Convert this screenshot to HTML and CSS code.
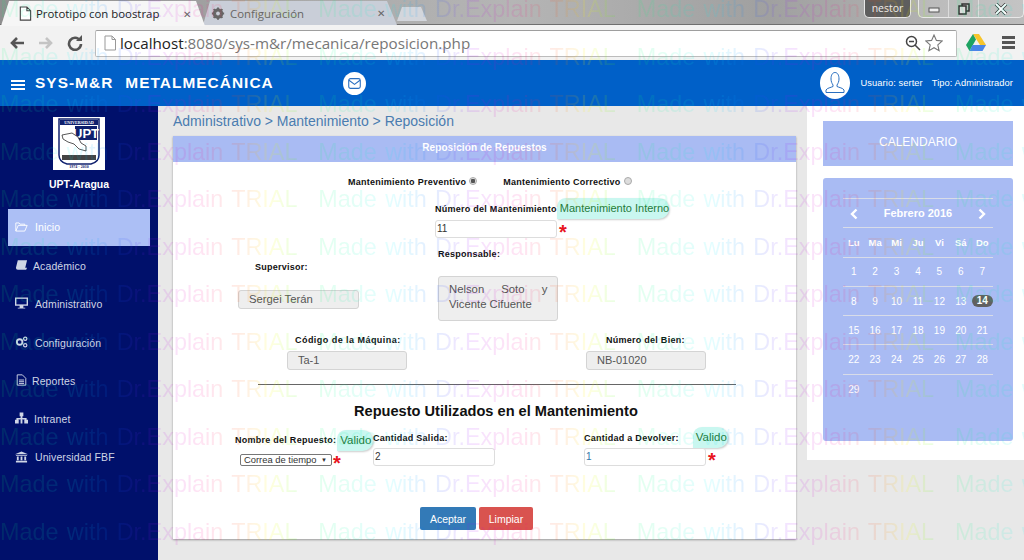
FILE: index.html
```html
<!DOCTYPE html>
<html lang="es">
<head>
<meta charset="utf-8">
<title>Prototipo con boostrap</title>
<link rel="stylesheet" href="styles.css">
</head>
<body>
<div class="app">
  <header class="chrome">
    <div class="tabstrip">
      <div class="tab tab-active">
        <svg class="tab-icon" viewBox="0 0 14 16"><path d="M2 1h7l4 4v10H2z M9 1v4h4" fill="#fff" stroke="#444" stroke-width="1.2"/></svg>
        <span class="tab-title">Prototipo con boostrap</span>
        <span class="tab-close">✕</span>
      </div>
      <div class="tab tab-idle">
        <svg class="tab-icon" viewBox="0 0 16 16"><circle cx="8" cy="8" r="4.5" fill="none" stroke="#666" stroke-width="3"/><path d="M8 1v14M1 8h14M3 3l10 10M13 3L3 13" stroke="#666" stroke-width="2.2"/><circle cx="8" cy="8" r="2.2" fill="#c9ced8"/></svg>
        <span class="tab-title tab-title-idle">Configuración</span>
        <span class="tab-close">✕</span>
      </div>
      <div class="tab-new"></div>
      <div class="win-user">nestor</div>
      <div class="win-controls">
        <span class="win-btn"><svg viewBox="0 0 14 10" width="14" height="10"><rect x="2" y="4" width="10" height="4" fill="#eee" stroke="#555"/></svg></span>
        <span class="win-btn"><svg viewBox="0 0 14 12" width="14" height="12"><rect x="5" y="1" width="7" height="7" fill="none" stroke="#333" stroke-width="1.5"/><rect x="2" y="3" width="7" height="8" fill="#ddd" stroke="#333" stroke-width="1.5"/></svg></span>
        <span class="win-btn win-close"><svg viewBox="0 0 14 12" width="14" height="12"><path d="M2 1l10 10M12 1L2 11" stroke="#333" stroke-width="3.4"/><path d="M2 1l10 10M12 1L2 11" stroke="#fff" stroke-width="2"/></svg></span>
      </div>
    </div>
    <div class="toolbar">
      <svg class="tool" viewBox="0 0 16 16"><path d="M15 8H3M8 3L3 8l5 5" fill="none" stroke="#555" stroke-width="2.6"/></svg>
      <svg class="tool" viewBox="0 0 16 16"><path d="M1 8h12M8 3l5 5-5 5" fill="none" stroke="#c4c4c4" stroke-width="2.6"/></svg>
      <svg class="tool" viewBox="0 0 16 16"><path d="M13 5.5A6 6 0 1 0 14 9" fill="none" stroke="#555" stroke-width="2.6"/><path d="M9 6h6V0z" fill="#555"/></svg>
      <div class="omnibox">
        <svg class="page-icon" viewBox="0 0 14 16"><path d="M2 1h7l3.500 3.500V15H2z M9 1v3.500h3.500" fill="#fff" stroke="#999"/></svg>
        <span class="url"><span class="url-host">localhost</span>:8080/sys-m&amp;r/mecanica/reposicion.php</span>
        <svg class="omni-zoom" viewBox="0 0 16 16"><circle cx="6.500" cy="6.500" r="5" fill="none" stroke="#444" stroke-width="1.500"/><path d="M4 6.500h5M10 10l5 5" stroke="#444" stroke-width="1.500"/></svg>
        <svg class="omni-star" viewBox="0 0 18 18"><path d="M9 1l2.400 5.400 5.800.6-4.400 3.900 1.300 5.800L9 13.700l-5.100 3 1.300-5.800L.8 7l5.800-.6z" fill="#fff" stroke="#777" stroke-width="1.100"/></svg>
      </div>
      <svg class="drive" viewBox="0 0 20 17"><path d="M7 0h6l7 11h-6z" fill="#f7c52c"/><path d="M7 0l3 5.500L3.500 17 0 11z" fill="#1ea362"/><path d="M6.500 11H20l-3.500 6H3.500z" fill="#4a86e8"/></svg>
      <div class="menu-lines"><span></span><span></span><span></span></div>
    </div>
  </header>

  <nav class="navbar">
    <div class="burger"><span></span><span></span><span></span></div>
    <div class="brand">SYS-M&amp;R<span class="brand-gap"></span>METALMECÁNICA</div>
    <div class="mail">
      <svg viewBox="0 0 14 12" width="13" height="11"><rect x=".7" y=".7" width="12.600" height="10.600" rx="2" fill="none" stroke="#2a6fc0" stroke-width="1.200"/><path d="M1 2.500l6 4.500 6-4.500" fill="none" stroke="#2a6fc0" stroke-width="1.200"/></svg>
    </div>
    <div class="nav-right">
      <div class="avatar">
        <svg viewBox="0 0 24 24" width="24" height="24"><path d="M8 8c0-4 1.500-6.500 4-6.500S16 4 16 8c0 2.500-1 4.500-2 6v1.500c2 1 6 1.500 7 3.500v2.500H3V19c1-2 5-2.500 7-3.500V14c-1-1.500-2-3.500-2-6z" fill="none" stroke="#2a6fc0" stroke-width="1"/></svg>
      </div>
      <span class="user-info">Usuario: serter</span>
      <span class="user-info">Tipo: Administrador</span>
    </div>
  </nav>

  <div class="workspace">
    <aside class="sidebar">
      <div class="logo">
        <svg viewBox="0 0 52 53" width="52" height="53">
          <rect width="52" height="53" fill="#fff"/>
          <path d="M6 2h40v36q0 7-8 9H14q-8-2-8-9z" fill="#fff" stroke="#10206e" stroke-width="1.500"/>
          <rect x="7" y="3" width="38" height="5" fill="#10206e"/>
          <text x="26" y="7" class="logo-top">UNIVERSIDAD</text>
          <rect x="22" y="9" width="22" height="14" fill="#10206e"/>
          <text x="33" y="21" class="logo-upt">UPT</text>
          <path d="M9 18l10-2 6 4 3 6 5 3v5l-7-2-5-5-6-2-5-3z" fill="#fff" stroke="#111" stroke-width=".7"/>
          <rect x="9" y="38" width="34" height="5" fill="#444"/>
          <text x="26" y="51" class="logo-bottom">1974 · 2010</text>
        </svg>
      </div>
      <div class="campus">UPT-Aragua</div>
      <ul class="side-menu">
        <li class="side-item side-active"><svg class="side-icon" viewBox="0 0 16 12"><path d="M1 11V1h4l1 1.500h6V4M1 11l3-7h11l-3 7z" fill="none" stroke="#fff" stroke-width="1.100"/></svg><span>Inicio</span></li>
        <li class="side-item side-b"><svg class="side-icon" viewBox="0 0 14 12"><path d="M3 1h10l-2 8H1zM1 9q0 2 2 2h9l1-2" fill="#cfd6e6"/></svg><span>Académico</span></li>
        <li class="side-item"><svg class="side-icon" viewBox="0 0 14 12"><path d="M0 0h14v9H9v2h2v1H3v-1h2V9H0z" fill="#cfd6e6"/><rect x="1.500" y="1.500" width="11" height="6" fill="#001070"/></svg><span>Administrativo</span></li>
        <li class="side-item side-c"><svg class="side-icon" viewBox="0 0 14 12"><circle cx="5" cy="6" r="3" fill="none" stroke="#cfd6e6" stroke-width="2"/><circle cx="11" cy="2.500" r="1.800" fill="none" stroke="#cfd6e6" stroke-width="1.300"/><circle cx="11" cy="9.500" r="1.800" fill="none" stroke="#cfd6e6" stroke-width="1.300"/></svg><span>Configuración</span></li>
        <li class="side-item side-r"><svg class="side-icon" viewBox="0 0 14 14"><path d="M2 1h6l4 4v8H2zM4 7h6M4 9h6M4 11h6" fill="none" stroke="#cfd6e6" stroke-width="1.100"/></svg><span>Reportes</span></li>
        <li class="side-item side-i"><svg class="side-icon" viewBox="0 0 14 12"><path d="M5 0h4v4H8v2h4.500v2H14v4h-4V8h.500V7.500h-3V8H8v4H6V8h.500v-.5h-3V8H4v4H0V8h1.500V6H6V4H5z" fill="#cfd6e6"/></svg><span>Intranet</span></li>
        <li class="side-item"><svg class="side-icon" viewBox="0 0 14 12"><path d="M7 0l7 3H0zM1 4h12v1H1zM2 5.500h2v4H2zM6 5.500h2v4H6zM10 5.500h2v4h-2zM1 10h12v2H1z" fill="#cfd6e6"/></svg><span>Universidad FBF</span></li>
      </ul>
    </aside>

    <main class="content">
      <div class="crumbs">Administrativo &gt; Mantenimiento &gt; Reposición</div>
      <section class="panel">
        <div class="panel-head">Reposición de Repuestos</div>
        <div class="radios">
          <label class="lbl">Mantenimiento Preventivo</label><span class="radio radio-on"></span>
          <label class="lbl radio-second">Mantenimiento Correctivo</label><span class="radio"></span>
        </div>
        <div class="numero">
          <div class="label-line">
            <label class="lbl">Número del Mantenimiento</label>
            <span class="bubble bubble-wide">Mantenimiento Interno</span>
          </div>
          <div class="field-line">
            <div class="input input-wide">11</div><span class="star">*</span>
          </div>
        </div>
        <div class="people">
          <div class="supervisor">
            <label class="lbl lbl-sup">Supervisor:</label>
            <div class="input input-off input-sup">Sergei Terán</div>
          </div>
          <div class="responsable">
            <label class="lbl">Responsable:</label>
            <div class="input-off area"><span class="area-just">Nelson Soto y</span><br>Vicente Cifuente</div>
          </div>
        </div>
        <div class="machine">
          <div class="machine-a">
            <label class="lbl lbl-code">Código de la Máquina:</label>
            <div class="input input-off input-mach">Ta-1</div>
          </div>
          <div class="machine-b">
            <label class="lbl lbl-bien">Número del Bien:</label>
            <div class="input input-off input-mach">NB-01020</div>
          </div>
        </div>
        <hr class="rule">
        <h2 class="subtitle">Repuesto Utilizados en el Mantenimiento</h2>
        <div class="parts">
          <div class="part-name">
            <div class="part-name-top">
              <label class="lbl">Nombre del Repuesto:</label>
              <span class="bubble bubble-valid">Valido</span>
            </div>
            <div class="select-line">
              <div class="select"><span>Correa de tiempo</span><span class="caret">▼</span></div><span class="star star-sel">*</span>
            </div>
          </div>
          <div class="part-out">
            <label class="lbl lbl-part">Cantidad Salida:</label>
            <div class="input input-wide">2</div>
          </div>
          <div class="part-back">
            <div class="part-back-top">
              <label class="lbl">Cantidad a Devolver:</label>
              <span class="bubble bubble-valid bubble-back">Valido</span>
            </div>
            <div class="field-line">
              <div class="input input-wide input-focus">1</div><span class="star">*</span>
            </div>
          </div>
        </div>
        <div class="actions">
          <button class="btn btn-ok">Aceptar</button>
          <button class="btn btn-clear">Limpiar</button>
        </div>
      </section>
    </main>

    <aside class="right">
      <div class="cal-title">CALENDARIO</div>
      <div class="calendar">
        <table class="cal-table">
          <tr class="cal-head">
            <th><svg class="cal-chevron" viewBox="0 0 8 12"><path d="M6.500 1.500L2 6l4.500 4.500" fill="none" stroke="#fff" stroke-width="2.400"/></svg></th>
            <th colspan="5">Febrero 2016</th>
            <th><svg class="cal-chevron" viewBox="0 0 8 12"><path d="M1.500 1.500L6 6l-4.500 4.500" fill="none" stroke="#fff" stroke-width="2.400"/></svg></th>
          </tr>
          <tr class="cal-days"><th>Lu</th><th>Ma</th><th>Mi</th><th>Ju</th><th>Vi</th><th>Sá</th><th>Do</th></tr>
          <tr><td>1</td><td>2</td><td>3</td><td>4</td><td>5</td><td>6</td><td>7</td></tr>
          <tr><td>8</td><td>9</td><td>10</td><td>11</td><td>12</td><td>13</td><td><span class="today">14</span></td></tr>
          <tr><td>15</td><td>16</td><td>17</td><td>18</td><td>19</td><td>20</td><td>21</td></tr>
          <tr><td>22</td><td>23</td><td>24</td><td>25</td><td>26</td><td>27</td><td>28</td></tr>
          <tr><td>29</td><td></td><td></td><td></td><td></td><td></td><td></td></tr>
        </table>
      </div>
    </aside>
  </div>
</div>

<div class="watermark" aria-hidden="true">
  <div class="wm-row"><span>Made with Dr.Explain TRIAL</span><span>Made with Dr.Explain TRIAL</span><span>Made with Dr.Explain TRIAL</span><span>Made with Dr.Explain TRIAL</span></div>
  <div class="wm-row"><span>Made with Dr.Explain TRIAL</span><span>Made with Dr.Explain TRIAL</span><span>Made with Dr.Explain TRIAL</span><span>Made with Dr.Explain TRIAL</span></div>
  <div class="wm-row"><span>Made with Dr.Explain TRIAL</span><span>Made with Dr.Explain TRIAL</span><span>Made with Dr.Explain TRIAL</span><span>Made with Dr.Explain TRIAL</span></div>
  <div class="wm-row"><span>Made with Dr.Explain TRIAL</span><span>Made with Dr.Explain TRIAL</span><span>Made with Dr.Explain TRIAL</span><span>Made with Dr.Explain TRIAL</span></div>
  <div class="wm-row"><span>Made with Dr.Explain TRIAL</span><span>Made with Dr.Explain TRIAL</span><span>Made with Dr.Explain TRIAL</span><span>Made with Dr.Explain TRIAL</span></div>
  <div class="wm-row"><span>Made with Dr.Explain TRIAL</span><span>Made with Dr.Explain TRIAL</span><span>Made with Dr.Explain TRIAL</span><span>Made with Dr.Explain TRIAL</span></div>
  <div class="wm-row"><span>Made with Dr.Explain TRIAL</span><span>Made with Dr.Explain TRIAL</span><span>Made with Dr.Explain TRIAL</span><span>Made with Dr.Explain TRIAL</span></div>
  <div class="wm-row"><span>Made with Dr.Explain TRIAL</span><span>Made with Dr.Explain TRIAL</span><span>Made with Dr.Explain TRIAL</span><span>Made with Dr.Explain TRIAL</span></div>
  <div class="wm-row"><span>Made with Dr.Explain TRIAL</span><span>Made with Dr.Explain TRIAL</span><span>Made with Dr.Explain TRIAL</span><span>Made with Dr.Explain TRIAL</span></div>
  <div class="wm-row"><span>Made with Dr.Explain TRIAL</span><span>Made with Dr.Explain TRIAL</span><span>Made with Dr.Explain TRIAL</span><span>Made with Dr.Explain TRIAL</span></div>
  <div class="wm-row"><span>Made with Dr.Explain TRIAL</span><span>Made with Dr.Explain TRIAL</span><span>Made with Dr.Explain TRIAL</span><span>Made with Dr.Explain TRIAL</span></div>
  <div class="wm-row"><span>Made with Dr.Explain TRIAL</span><span>Made with Dr.Explain TRIAL</span><span>Made with Dr.Explain TRIAL</span><span>Made with Dr.Explain TRIAL</span></div>
</div>
</body>
</html>
```

FILE: styles.css
```css
* { box-sizing: border-box; }
html, body { margin: 0; height: 560px; overflow: hidden; }
body { font-family: "Liberation Sans", Arial, sans-serif; background: #e8e8e8; position: relative; width: 1024px; }
.app { display: flex; flex-direction: column; height: 560px; }

/* browser chrome */
.chrome { height: 60px; flex: none; }
.tabstrip { height: 25px; display: flex; align-items: flex-start; background: linear-gradient(90deg, #8f8f8f 0, #a9a9a9 30%, #b5b5b5 50%, #a0a0a0 75%, #bcbcbc 100%); border-bottom: 1px solid #6f6f6f; font-family: "Open Sans", sans-serif; }
.tab { height: 24px; margin-top: 1px; display: flex; align-items: center; }
.tab-active { width: 204px; margin-left: 1px; padding-left: 17px; height: 25px; background: #f6f6f6; clip-path: polygon(0 100%, 8px 0, 195px 0, 204px 100%); position: relative; z-index: 1; }
.tab-idle { width: 194px; margin-left: -2px; padding-left: 8px; background: #c9ced8; clip-path: polygon(0 100%, 7px 0, 184px 0, 194px 100%); }
.tab-icon { width: 14px; height: 15px; flex: none; }
.tab-title { font-size: 11.400px; color: #222; margin-left: 4px; width: 147px; white-space: nowrap; }
.tab-title-idle { color: #666; margin-left: 5px; width: 147px; }
.tab-close { font-size: 10px; color: #666; }
.tab-new { width: 30px; height: 14px; margin: 7px 0 0 0; background: #d3d6dc; clip-path: polygon(0 100%, 5px 0, 24px 0, 30px 100%); }
.win-user { margin-left: 437px; width: 47px; height: 18px; background: #5e5e5e; border: 1px solid #e8e8e8; border-top: 0; border-radius: 0 0 5px 5px; color: #eee; font-size: 10.5px; line-height: 16px; text-align: center; }
.win-controls { margin-left: 7px; display: flex; height: 18px; border: 1px solid #e8e8e8; border-top: 0; border-radius: 0 0 5px 5px; width: 106px; }
.win-btn { flex: 1; display: flex; align-items: center; justify-content: center; border-right: 1px solid #dcdcdc; background: rgba(255,255,255,.12); }
.win-close { flex: 1.5; border-right: 0; }
.toolbar { height: 35px; display: flex; align-items: center; background: #f2f2f2; padding-left: 9px; }
.tool { width: 16px; height: 16px; margin-right: 13px; flex: none; }
.toolbar .tool:nth-child(3) { margin-right: 12px; }
.omnibox { width: 862px; height: 27px; background: #fff; border: 1px solid #bcbcbc; border-top-color: #9e9e9e; border-radius: 2px; display: flex; align-items: center; padding-left: 7px; margin-top: 1px; }
.page-icon { width: 14px; height: 16px; flex: none; }
.url { font-family: "Open Sans", sans-serif; font-size: 15.200px; color: #777; margin-left: 3px; width: 785px; white-space: nowrap; }
.url-host { color: #222; }
.omni-zoom { width: 16px; height: 16px; flex: none; }
.omni-star { width: 18px; height: 18px; flex: none; margin-left: 4px; }
.drive { width: 20px; height: 17px; margin-left: 9px; flex: none; }
.menu-lines { margin-left: 16px; width: 13px; display: flex; flex-direction: column; gap: 2px; }
.menu-lines span { height: 3px; background: #555; }

/* navbar */
.navbar { height: 46px; flex: none; background: #0060c8; display: flex; align-items: center; color: #fff; padding: 0 11px; }
.burger { width: 14px; display: flex; flex-direction: column; gap: 2px; margin-top: 3px; }
.burger span { height: 2px; background: #fff; }
.brand { font-weight: bold; font-size: 15.400px; letter-spacing: 1.050px; margin-left: 10px; width: 308px; white-space: nowrap; }
.brand-gap { display: inline-block; width: 12px; }
.mail { width: 23px; height: 23px; border-radius: 50%; background: #fff; display: flex; align-items: center; justify-content: center; flex: none; margin-top: 1px; }
.nav-right { display: flex; align-items: center; margin-left: auto; }
.avatar { width: 30px; height: 32px; border-radius: 50%; background: #fff; display: flex; align-items: center; justify-content: center; margin-right: 11px; }
.user-info { font-size: 9.300px; letter-spacing: .08px; margin-right: 9px; white-space: nowrap; }
.user-info:last-child { margin-right: 0; }

/* workspace */
.workspace { flex: 1; display: flex; min-height: 0; }
.sidebar { width: 158px; flex: none; background: #00106b; display: flex; flex-direction: column; padding-top: 11px; }
.logo { width: 52px; height: 53px; margin-left: 53px; }
.logo svg { display: block; }
.logo-top { font: bold 4.2px "Liberation Serif", serif; fill: #fff; text-anchor: middle; }
.logo-upt { font: bold 13px "Liberation Sans", sans-serif; fill: #fff; text-anchor: middle; }
.logo-bottom { font: bold 4px "Liberation Serif", serif; fill: #10206e; text-anchor: middle; }
.campus { font-size: 10.500px; font-weight: bold; color: #fff; margin: 8px 0 0 49px; line-height: 12px; }
.side-menu { list-style: none; margin: 19px 0 0 8px; padding: 0; width: 142px; }
.side-item { height: 38.300px; display: flex; align-items: center; padding-left: 7px; font-size: 10.5px; letter-spacing: .1px; color: #cfd6e6; }
.side-item span { margin-left: 7px; }
.side-icon { width: 13px; height: 12px; flex: none; margin-top: -1px; }
.side-active { height: 37px; background: #acbff5; color: #fff; margin-bottom: .5px; padding-bottom: 1px; }
.side-b span { margin-left: 5px; }
.side-c { padding-top: 1px; }
.side-r span { margin-left: 4px; }
.side-i span { margin-left: 6px; }

.content { width: 649px; flex: none; padding: 7px 0 0 15px; }
.crumbs { font-size: 14px; line-height: 16px; color: #4a7cb0; height: 23px; }
.panel { width: 623px; height: 403px; background: #fff; box-shadow: 0 1px 2px rgba(0,0,0,.35); }
.panel-head { height: 26px; background: #a9bbf3; color: #fff; font-size: 10px; font-weight: bold; text-align: center; line-height: 23px; letter-spacing: .1px; }
.lbl { font-size: 9px; font-weight: bold; letter-spacing: .26px; color: #111; line-height: 12px; white-space: nowrap; display: block; }

.radios { display: flex; align-items: center; height: 12px; margin: 14px 0 0 175px; }
.radio { width: 8px; height: 8px; border-radius: 50%; border: 1px solid #aaa; background: #ddd; margin-left: 3px; margin-top: -3px; flex: none; }
.radio-on { background: radial-gradient(circle, #555 0 2px, #ddd 2.500px); }
.radio-second { margin-left: 26px; }

.numero { margin: 10px 0 0 262px; }
.label-line { display: flex; align-items: center; height: 22px; }
.bubble { background: #c9f7f0; color: #1f7a3a; font-size: 11px; height: 21px; line-height: 20px; border-radius: 10px 12px 12px 0; box-shadow: 1px 1px 2px rgba(0,0,0,.2); white-space: nowrap; }
.bubble-wide { width: 112px; margin: -1px 0 0 0; padding-left: 3px; }
.field-line { display: flex; align-items: center; }
.input { height: 18px; border: 1px solid #ddd; border-radius: 3px; background: #fff; font-size: 10px; line-height: 16px; color: #333; padding-left: 1px; }
.input-wide { width: 122px; }
.input-focus { color: #37a; }
.star { color: #e8141e; font-size: 20px; line-height: 14px; height: 12px; margin: 3px 0 0 2px; font-weight: bold; }
.input-off { background: #eee; border: 1px solid #d4d4d4; border-radius: 3px; color: #555; font-size: 11.300px; }

.people { display: flex; margin-top: 10px; }
.supervisor { margin-left: 65px; width: 121px; padding-top: 13px; }
.lbl-sup { margin: 0 0 17px 17px; }
.input-sup { width: 121px; height: 19px; line-height: 17px; padding-left: 10px; }
.responsable { margin-left: 79px; }
.responsable .lbl { margin-bottom: 16px; }
.area { width: 120px; height: 45px; padding: 5px 10px 0; line-height: 15px; }
.area-just { display: inline-block; width: 100px; word-spacing: 14px; white-space: nowrap; }

.machine { display: flex; margin: 13px 0 0 114px; }
.machine-a { width: 120px; }
.machine-b { width: 120px; margin-left: 179px; }
.lbl-code { margin: 0 0 5px 8px; letter-spacing: .46px; }
.lbl-bien { margin: 0 0 5px 20px; }
.input-mach { width: 120px; height: 19px; line-height: 17px; padding-left: 10px; font-size: 11px; }
.rule { margin: 14px 0 0 85px; width: 478px; height: 1px; border: 0; background: #666; }
.subtitle { margin: 18px 0 0 181px; font-size: 14.600px; line-height: 16px; color: #111; white-space: nowrap; }

.parts { display: flex; margin: 8px 0 0 62px; }
.part-name { width: 138px; }
.part-name-top { display: flex; align-items: center; height: 24px; padding-top: 2px; }
.bubble-valid { margin-left: 1px; width: 38px; padding-left: 3px; font-size: 11.500px; margin-top: 1px; }
.select-line { display: flex; align-items: center; margin-left: 5px; }
.select { width: 92px; height: 12px; border: 1px solid #777; border-radius: 2px; background: #fff; font-size: 9.400px; line-height: 10px; padding-left: 3px; color: #333; display: flex; justify-content: space-between; padding-right: 4px; }
.caret { font-size: 6px; }
.star-sel { margin: 5px 0 0 1px; }
.part-out { width: 211px; padding-top: 5px; }
.lbl-part { margin-bottom: 4px; }
.part-back-top { display: flex; height: 21px; align-items: flex-start; }
.part-back-top .lbl { padding-top: 5px; }
.bubble-back { margin: 0 0 0 14px; width: 35px; }

.actions { display: flex; gap: 3px; margin: 39px 0 0 247px; }
.btn { height: 23px; border: 0; border-radius: 2px; color: #fff; font: 10.500px "Liberation Sans", sans-serif; padding: 0; }
.btn-ok { width: 56px; background: #337ab7; }
.btn-clear { width: 54px; background: #d9534f; }

/* right column */
.right { flex: 1; height: 354px; background: #fff; padding: 15px 11px 0 16px; }
.cal-title { height: 45px; background: #a9bbf3; color: #fff; font-size: 12px; text-align: center; line-height: 43px; }
.calendar { margin-top: 12px; height: 263px; background: #a9bbf3; border-radius: 3px; padding: 20px 20px 0; }
.cal-table { width: 150px; border-collapse: collapse; table-layout: fixed; color: #fff; font-size: 10px; text-align: center; }
.cal-table tr { height: 29.300px; border-top: 1px solid #d8dce8; }
.cal-table td, .cal-table th { padding: 0; }
.cal-head { font-size: 11px; }
.cal-chevron { width: 8px; height: 12px; display: inline-block; vertical-align: middle; }
.cal-days th { font-size: 9.500px; }
.today { display: inline-block; width: 21px; background: #606060; border-radius: 6px; font-weight: bold; line-height: 12px; }

/* watermark overlay */
.watermark { position: absolute; left: 0; top: -14px; width: 1024px; pointer-events: none; overflow: hidden; z-index: 10; }
.wm-row { display: flex; height: 47.500px; line-height: 47.500px; font-size: 23.400px; word-spacing: 1.800px; white-space: nowrap; }
.wm-row span { flex: none; width: 318.330px; color: transparent;
  background: linear-gradient(90deg, rgba(0,255,110,.11) 0, rgba(0,240,255,.11) 75px, rgba(0,90,255,.11) 115px, rgba(170,0,255,.11) 155px, rgba(255,0,150,.11) 200px, rgba(255,80,0,.11) 240px, rgba(255,255,0,.13) 270px, rgba(60,255,0,.11) 298px);
  -webkit-background-clip: text; background-clip: text; }
```
